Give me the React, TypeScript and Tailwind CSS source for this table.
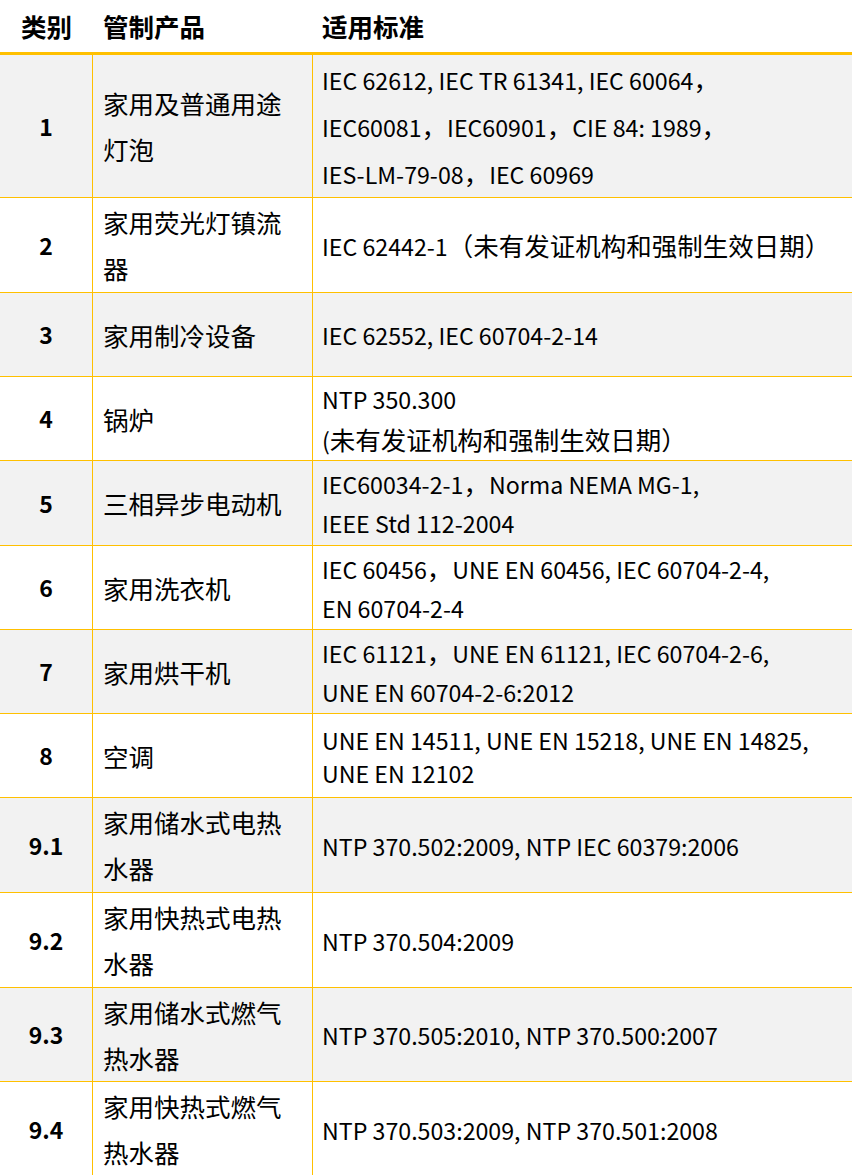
const rows: {
  no: string;
  product: string;
  standards: string[];
  h: string;
  lh: string;
  bg: string;
}[] = [
  {
    no: "1",
    product: "家用及普通用途灯泡",
    standards: [
      "IEC 62612, IEC TR 61341, IEC 60064，",
      "IEC60081，IEC60901，CIE 84: 1989，",
      "IES-LM-79-08，IEC 60969",
    ],
    h: "h-[143px]",
    lh: "leading-[46px]",
    bg: "bg-[#f2f2f2]",
  },
  {
    no: "2",
    product: "家用荧光灯镇流器",
    standards: ["IEC 62442-1（未有发证机构和强制生效日期）"],
    h: "h-[95px]",
    lh: "leading-[46px]",
    bg: "bg-white",
  },
  {
    no: "3",
    product: "家用制冷设备",
    standards: ["IEC 62552, IEC 60704-2-14"],
    h: "h-[84px]",
    lh: "leading-[46px]",
    bg: "bg-[#f2f2f2]",
  },
  {
    no: "4",
    product: "锅炉",
    standards: ["NTP 350.300", "(未有发证机构和强制生效日期）"],
    h: "h-[84px]",
    lh: "leading-[40px]",
    bg: "bg-white",
  },
  {
    no: "5",
    product: "三相异步电动机",
    standards: ["IEC60034-2-1，Norma NEMA MG-1,", "IEEE Std 112-2004"],
    h: "h-[85px]",
    lh: "leading-[38px]",
    bg: "bg-[#f2f2f2]",
  },
  {
    no: "6",
    product: "家用洗衣机",
    standards: ["IEC 60456，UNE EN 60456, IEC 60704-2-4,", "EN 60704-2-4"],
    h: "h-[84px]",
    lh: "leading-[38px]",
    bg: "bg-white",
  },
  {
    no: "7",
    product: "家用烘干机",
    standards: ["IEC 61121，UNE EN 61121, IEC 60704-2-6,", "UNE EN 60704-2-6:2012"],
    h: "h-[84px]",
    lh: "leading-[38px]",
    bg: "bg-[#f2f2f2]",
  },
  {
    no: "8",
    product: "空调",
    standards: ["UNE EN 14511, UNE EN 15218, UNE EN 14825,", "UNE EN 12102"],
    h: "h-[84px]",
    lh: "leading-[32px]",
    bg: "bg-white",
  },
  {
    no: "9.1",
    product: "家用储水式电热水器",
    standards: ["NTP 370.502:2009, NTP IEC 60379:2006"],
    h: "h-[95px]",
    lh: "leading-[46px]",
    bg: "bg-[#f2f2f2]",
  },
  {
    no: "9.2",
    product: "家用快热式电热水器",
    standards: ["NTP 370.504:2009"],
    h: "h-[95px]",
    lh: "leading-[46px]",
    bg: "bg-white",
  },
  {
    no: "9.3",
    product: "家用储水式燃气热水器",
    standards: ["NTP 370.505:2010, NTP 370.500:2007"],
    h: "h-[94px]",
    lh: "leading-[46px]",
    bg: "bg-[#f2f2f2]",
  },
  {
    no: "9.4",
    product: "家用快热式燃气热水器",
    standards: ["NTP 370.503:2009, NTP 370.501:2008"],
    h: "h-[95px]",
    lh: "leading-[46px]",
    bg: "bg-white",
  },
];

// Latin runs come out wider than the original's Calibri, so they get a smaller size
function Mixed({ text }: { text: string }) {
  const parts = text.split(/([\u3000-\u9fff\uff00-\uffef]+)/).filter(Boolean);
  return (
    <>
      {parts.map((p, i) =>
        /[\u3000-\u9fff\uff00-\uffef]/.test(p) ? (
          <span key={i} className="text-[25.5px]">
            {p}
          </span>
        ) : (
          <span key={i} className="text-[23.2px]">
            {p}
          </span>
        )
      )}
    </>
  );
}

export default function App() {
  return (
    <div className="w-[852px] bg-white font-['Noto_Sans_CJK_SC',sans-serif] text-[25.5px] text-black">
      {/* header */}
      <div className="flex h-[55px] items-center border-b-[3px] border-[#ffc000] font-bold">
        <div className="w-[93px] shrink-0 text-center">类别</div>
        <div className="w-[220px] shrink-0 pl-[10px]">管制产品</div>
        <div className="flex-1 pl-[9px]">适用标准</div>
      </div>

      {rows.map((r) => (
        <div key={r.no} className={`flex border-b border-[#ffc000] ${r.h} ${r.bg}`}>
          <div className="flex w-[93px] shrink-0 items-center justify-center border-r border-[#ffc000] text-[23px] font-bold">
            {r.no}
          </div>
          <div className="flex w-[220px] shrink-0 items-center border-r border-[#ffc000] px-[10px] leading-[46px]">
            <p>{r.product}</p>
          </div>
          <div className={`flex flex-1 flex-col justify-center pl-[9px] ${r.lh}`}>
            {r.standards.map((s) => (
              <p key={s} className="whitespace-nowrap">
                <Mixed text={s} />
              </p>
            ))}
          </div>
        </div>
      ))}
    </div>
  );
}
